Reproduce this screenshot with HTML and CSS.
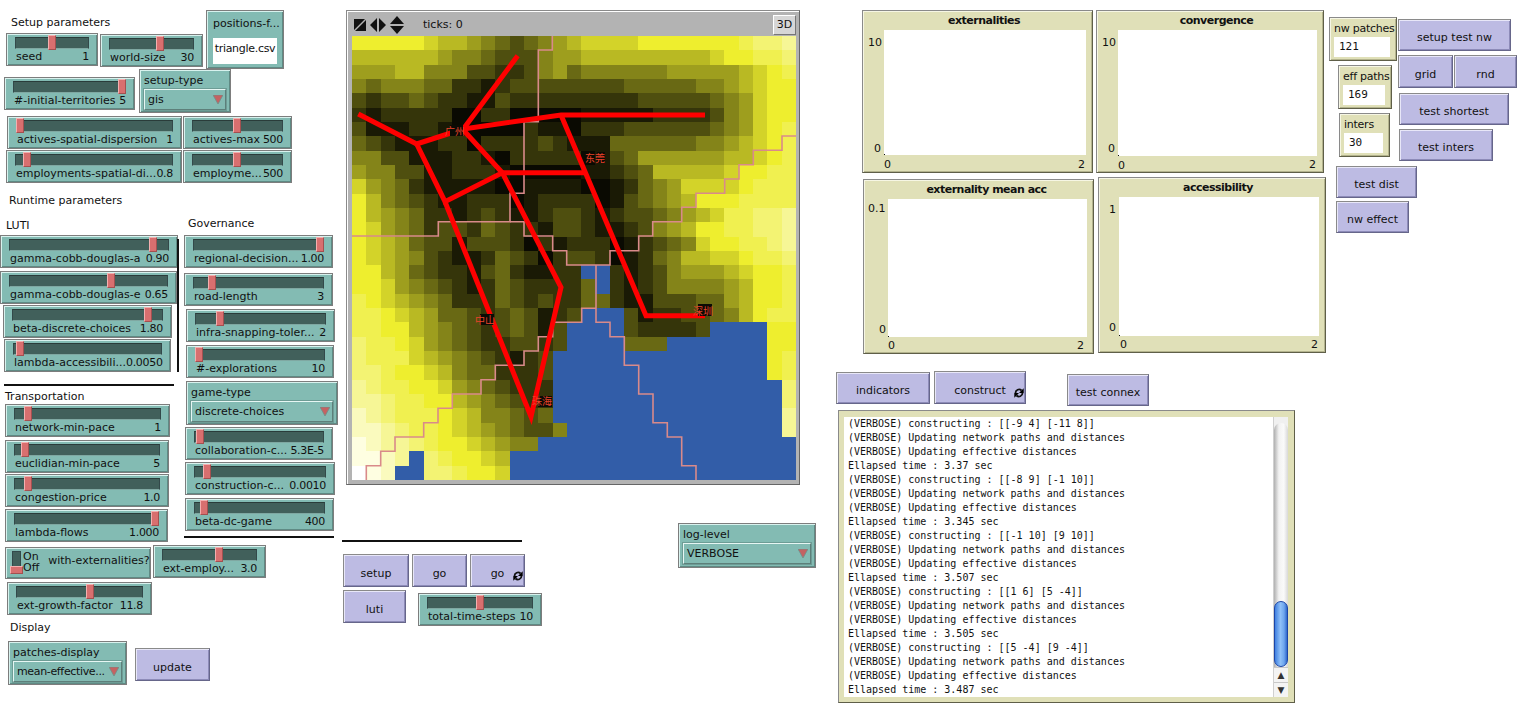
FILE: index.html
```html
<!DOCTYPE html>
<html lang="en">
<head>
  <meta charset="UTF-8" />
  <title>NetLogo interface</title>
  <link rel="stylesheet" href="styles.css">
</head>
<body>
<div class="canvas">

  <!-- setup -->
  <div class="note n-setup">Setup parameters</div>
  <div class="slider w-seed"><div class="track"><i class="thumb" style="--v:50"></i></div><div class="row"><span>seed</span><span>1</span></div></div>
  <div class="slider w-world"><div class="track"><i class="thumb" style="--v:61"></i></div><div class="row"><span>world-size</span><span>30</span></div></div>
  <div class="inputbox w-positions"><div class="input-label">positions-f...</div><div class="input-value">triangle.csv</div></div>
  <div class="slider w-terr"><div class="track"><i class="thumb" style="--v:100"></i></div><div class="row"><span>#-initial-territories</span><span>5</span></div></div>
  <div class="chooser w-setuptype"><div class="chooser-label">setup-type</div><div class="chooser-box"><span>gis</span><svg class="arrow" viewBox="0 0 10 10"><path d="M0 0H10L5 9Z"/></svg></div></div>
  <div class="slider w-actives"><div class="track"><i class="thumb" style="--v:0"></i></div><div class="row"><span>actives-spatial-dispersion</span><span>1</span></div></div>
  <div class="slider w-activesmax"><div class="track"><i class="thumb" style="--v:49"></i></div><div class="row"><span>actives-max</span><span>500</span></div></div>
  <div class="slider w-employ"><div class="track"><i class="thumb" style="--v:5"></i></div><div class="row"><span>employments-spatial-di...</span><span>0.8</span></div></div>
  <div class="slider w-employmax"><div class="track"><i class="thumb" style="--v:49"></i></div><div class="row"><span>employme...</span><span>500</span></div></div>

  <!-- runtime -->
  <div class="note n-runtime">Runtime parameters</div>
  <div class="note n-luti">LUTI</div>
  <div class="note n-gov">Governance</div>
  <div class="slider w-gammaa"><div class="track"><i class="thumb" style="--v:92"></i></div><div class="row"><span>gamma-cobb-douglas-a</span><span>0.90</span></div></div>
  <div class="slider w-gammae"><div class="track"><i class="thumb" style="--v:65"></i></div><div class="row"><span>gamma-cobb-douglas-e</span><span>0.65</span></div></div>
  <div class="slider w-beta"><div class="track"><i class="thumb" style="--v:92"></i></div><div class="row"><span>beta-discrete-choices</span><span>1.80</span></div></div>
  <div class="slider w-lambda"><div class="track"><i class="thumb" style="--v:2"></i></div><div class="row"><span>lambda-accessibili...</span><span>0.0050</span></div></div>
  <div class="rule r-luti"></div>
  <div class="rule r-transport"></div>
  <div class="note n-transport">Transportation</div>
  <div class="slider w-network"><div class="track"><i class="thumb" style="--v:7"></i></div><div class="row"><span>network-min-pace</span><span>1</span></div></div>
  <div class="slider w-euclid"><div class="track"><i class="thumb" style="--v:5"></i></div><div class="row"><span>euclidian-min-pace</span><span>5</span></div></div>
  <div class="slider w-congestion"><div class="track"><i class="thumb" style="--v:7"></i></div><div class="row"><span>congestion-price</span><span>1.0</span></div></div>
  <div class="slider w-flows"><div class="track"><i class="thumb" style="--v:100"></i></div><div class="row"><span>lambda-flows</span><span>1.000</span></div></div>
  <div class="switch w-ext">
    <div class="switch-track"><i class="switch-thumb"></i></div>
    <div class="switch-states"><span>On</span><span>Off</span></div>
    <div class="switch-label">with-externalities?</div>
  </div>
  <div class="slider w-extemploy"><div class="track"><i class="thumb" style="--v:61"></i></div><div class="row"><span>ext-employ...</span><span>3.0</span></div></div>
  <div class="slider w-extgrowth"><div class="track"><i class="thumb" style="--v:59"></i></div><div class="row"><span>ext-growth-factor</span><span>11.8</span></div></div>
  <div class="note n-display">Display</div>
  <div class="chooser w-patches"><div class="chooser-label">patches-display</div><div class="chooser-box"><span>mean-effective...</span><svg class="arrow" viewBox="0 0 10 10"><path d="M0 0H10L5 9Z"/></svg></div></div>
  <div class="btn w-update">update</div>

  <!-- governance -->
  <div class="slider w-regional"><div class="track"><i class="thumb" style="--v:100"></i></div><div class="row"><span>regional-decision...</span><span>1.00</span></div></div>
  <div class="slider w-road"><div class="track"><i class="thumb" style="--v:12"></i></div><div class="row"><span>road-length</span><span>3</span></div></div>
  <div class="slider w-infra"><div class="track"><i class="thumb" style="--v:17"></i></div><div class="row"><span>infra-snapping-toler...</span><span>2</span></div></div>
  <div class="slider w-explo"><div class="track"><i class="thumb" style="--v:0"></i></div><div class="row"><span>#-explorations</span><span>10</span></div></div>
  <div class="chooser w-game"><div class="chooser-label">game-type</div><div class="chooser-box"><span>discrete-choices</span><svg class="arrow" viewBox="0 0 10 10"><path d="M0 0H10L5 9Z"/></svg></div></div>
  <div class="slider w-collab"><div class="track"><i class="thumb" style="--v:2"></i></div><div class="row"><span>collaboration-c...</span><span>5.3E-5</span></div></div>
  <div class="slider w-construct"><div class="track"><i class="thumb" style="--v:7"></i></div><div class="row"><span>construction-c...</span><span>0.0010</span></div></div>
  <div class="slider w-betadc"><div class="track"><i class="thumb" style="--v:5"></i></div><div class="row"><span>beta-dc-game</span><span>400</span></div></div>
  <div class="rule r-gov"></div>

  <!-- world view -->
  <div class="view">
    <div class="view-head">
      <svg class="view-icons" width="54" height="18" viewBox="0 0 54 18">
        <path d="M1 3H12L1 14Z M13 4V15H2Z"/>
        <path d="M24 2V16L17 9Z M26 2V16L33 9Z"/>
        <path d="M44 0L51 8H37Z M44 18L51 10H37Z"/>
      </svg>
      <span class="ticks">ticks: 0</span>
      <span class="btn3d">3D</span>
    </div>
    <svg class="world" viewBox="352 36 444 444" width="444" height="444">
      <g id="patches" shape-rendering="crispEdges"></g>
      <g class="borders">
        <polyline points="552.3,36 552.3,50 538.3,50 538.3,121.7 524,121.7 524,193.3 510,193.3 510,221.7 438.3,221.7 438.3,236 352,236"/>
        <polyline points="510,221.7 524,221.7 524,236 552.7,236 552.7,250.7 566.7,250.7 566.7,265 610,265 610,250.7 638.7,250.7 638.7,236 652.7,236 652.7,221.7 681.7,221.7 681.7,207.3 696,207.3 696,193.3 724.7,193.3 724.7,179 739,179 739,164.7 753.3,164.7 753.3,150.3 782,150.3 782,136 796,136"/>
        <polyline points="596,265 596,322.3 610,322.3 610,336.7 624.3,336.7 624.3,365.3 638.7,365.3 638.7,394 653,394 653,422.7 667.3,422.7 667.3,437 681.7,437 681.7,465.7 696,465.7 696,480"/>
        <polyline points="596,308.3 581.7,308.3 581.7,322.3 552.7,322.3 552.7,336.7 538.3,336.7 538.3,351 524,351 524,365.3 495.3,365.3 495.3,379.7 481,379.7 481,394 452.3,394 452.3,408.3 438,408.3 438,422.7 423.7,422.7 423.7,437 395,437 395,451.3 380.7,451.3 380.7,465.7 366.3,465.7 366.3,480"/>
      </g>
      <g class="roads">
        <polyline points="517.7,55.7 463.3,129 416.7,144 358.3,114"/>
        <polyline points="463.3,129 561,115 705,115"/>
        <polyline points="463.3,130 502.3,172.7 445,201.7 416.7,144"/>
        <polyline points="445,201.7 531,416.7 561,287.3 502.3,172.7 586.7,172.7"/>
        <polyline points="561,115 646,315.7 705,315.7"/>
      </g>
      <g class="cities">
        <rect x="450" y="125" width="13" height="11"/>
        <rect x="597" y="152" width="8" height="11"/>
        <rect x="480" y="314" width="14" height="11"/>
        <rect x="538" y="396" width="14" height="11"/>
        <rect x="698" y="304" width="14" height="12"/>
      </g>
      <g class="city-names">
        <text x="445" y="135">广州</text>
        <text x="585" y="162">东莞</text>
        <text x="475" y="324">中山</text>
        <text x="532" y="405">珠海</text>
        <text x="693" y="315">深圳</text>
      </g>
    </svg>
  </div>

  <div class="rule r-view"></div>
  <div class="btn w-setup">setup</div>
  <div class="btn w-go">go</div>
  <div class="btn w-goloop">go<svg class="forever" viewBox="0 0 10 10"><path class="loop" d="M1.5 5A3.5 3.5 0 0 1 7.5 2.5M8.5 5A3.5 3.5 0 0 1 2.5 7.5"/><path d="M9.7 .3V5H5ZM.3 9.7V5H5Z"/></svg></div>
  <div class="btn w-luti">luti</div>
  <div class="slider w-total"><div class="track"><i class="thumb" style="--v:50"></i></div><div class="row"><span>total-time-steps</span><span>10</span></div></div>
  <div class="chooser w-log"><div class="chooser-label">log-level</div><div class="chooser-box"><span>VERBOSE</span><svg class="arrow" viewBox="0 0 10 10"><path d="M0 0H10L5 9Z"/></svg></div></div>

  <!-- plots -->
  <div class="plot p-ext">
    <div class="plot-title">externalities</div>
    <div class="plot-area"></div>
    <span class="ymax">10</span><span class="ymin">0</span><span class="xmin">0</span><span class="xmax">2</span>
  </div>
  <div class="plot p-conv">
    <div class="plot-title">convergence</div>
    <div class="plot-area"></div>
    <span class="ymax">10</span><span class="ymin">0</span><span class="xmin">0</span><span class="xmax">2</span>
  </div>
  <div class="plot p-mean">
    <div class="plot-title">externality mean acc</div>
    <div class="plot-area"></div>
    <span class="ymax">0.1</span><span class="ymin">0</span><span class="xmin">0</span><span class="xmax">2</span>
  </div>
  <div class="plot p-access">
    <div class="plot-title">accessibility</div>
    <div class="plot-area"></div>
    <span class="ymax">1</span><span class="ymin">0</span><span class="xmin">0</span><span class="xmax">2</span>
  </div>

  <!-- monitors and test buttons -->
  <div class="monitor m-nw"><div class="monitor-label">nw patches</div><div class="monitor-value">121</div></div>
  <div class="monitor m-eff"><div class="monitor-label">eff paths</div><div class="monitor-value">169</div></div>
  <div class="monitor m-inters"><div class="monitor-label">inters</div><div class="monitor-value">30</div></div>
  <div class="btn w-setuptest">setup test nw</div>
  <div class="btn w-grid">grid</div>
  <div class="btn w-rnd">rnd</div>
  <div class="btn w-shortest">test shortest</div>
  <div class="btn w-testinters">test inters</div>
  <div class="btn w-dist">test dist</div>
  <div class="btn w-nweffect">nw effect</div>
  <div class="btn w-indicators">indicators</div>
  <div class="btn w-constructbtn">construct<svg class="forever" viewBox="0 0 10 10"><path class="loop" d="M1.5 5A3.5 3.5 0 0 1 7.5 2.5M8.5 5A3.5 3.5 0 0 1 2.5 7.5"/><path d="M9.7 .3V5H5ZM.3 9.7V5H5Z"/></svg></div>
  <div class="btn w-connex">test connex</div>

  <!-- output -->
  <div class="output">
    <pre class="log">(VERBOSE) constructing : [[-9 4] [-11 8]]
(VERBOSE) Updating network paths and distances
(VERBOSE) Updating effective distances
Ellapsed time : 3.37 sec
(VERBOSE) constructing : [[-8 9] [-1 10]]
(VERBOSE) Updating network paths and distances
(VERBOSE) Updating effective distances
Ellapsed time : 3.345 sec
(VERBOSE) constructing : [[-1 10] [9 10]]
(VERBOSE) Updating network paths and distances
(VERBOSE) Updating effective distances
Ellapsed time : 3.507 sec
(VERBOSE) constructing : [[1 6] [5 -4]]
(VERBOSE) Updating network paths and distances
(VERBOSE) Updating effective distances
Ellapsed time : 3.505 sec
(VERBOSE) constructing : [[5 -4] [9 -4]]
(VERBOSE) Updating network paths and distances
(VERBOSE) Updating effective distances
Ellapsed time : 3.487 sec</pre>
    <div class="scrollbar">
      <div class="scroll-track"><div class="scroll-thumb"></div></div>
      <div class="scroll-btn">▲</div>
      <div class="scroll-btn">▼</div>
    </div>
  </div>
</div>
<script src="script.js"></script>
</body>
</html>
```

FILE: styles.css
```css
* {
  box-sizing: border-box;
}
html, body {
  margin: 0;
  padding: 0;
  height: 100%;
  background: white;
  overflow: hidden;
}
body {
  font-family: "DejaVu Sans", sans-serif;
  font-size: 11px;
  color: #111;
}
.canvas {
  position: relative;
  width: 1526px;
  height: 713px;
}

/* every widget sits on the free canvas */
.note, .rule, .slider, .chooser, .btn, .inputbox, .switch, .plot, .monitor, .view, .output {
  position: absolute;
}

.note {
  line-height: 14px;
  white-space: nowrap;
}
.n-setup { left: 11px; top: 16px; }
.n-runtime { left: 9px; top: 194px; }
.n-luti { left: 6px; top: 219px; }
.n-gov { left: 188px; top: 217px; }
.n-transport { left: 5px; top: 390px; }
.n-display { left: 10px; top: 621px; }

.rule {
  height: 2px;
  background: #111;
}
.r-luti { left: 177px; top: 239px; width: 2px; height: 133px; }
.r-transport { left: 4px; top: 384px; width: 170px; }
.r-gov { left: 184px; top: 536px; width: 150px; }
.r-view { left: 342px; top: 540px; width: 180px; }

/* sliders */
.slider, .chooser, .inputbox, .switch {
  background: #83bbb3;
  border: 1px solid #7d7d7d;
  box-shadow: inset 1px 1px 0 #d8f2ee, inset -1px -1px 0 #5f8a84;
}
.slider {
  padding: 3px 8px 0;
}
.track {
  position: relative;
  height: 12px;
  background: #41605b;
  border: 1px solid #33494a;
  border-top-color: #2a3c3a;
  border-bottom-color: #7fa8a2;
}
.thumb {
  position: absolute;
  top: -3px;
  left: calc((100% - 6px) * var(--v) / 100);
  width: 8px;
  height: 15px;
  margin-left: -1px;
  background: #d86f6f;
  border: 1px solid #a35050;
  border-left-color: #f3b0b0;
  border-top-color: #f3b0b0;
}
.row {
  display: flex;
  justify-content: space-between;
  margin-top: 1px;
  padding: 0 0 0 1px;
  line-height: 14px;
  white-space: nowrap;
}
.row span:last-child {
  letter-spacing: -0.3px;
}

.w-seed { left: 6px; top: 33px; width: 92px; height: 33px; }
.w-world { left: 100px; top: 34px; width: 103px; height: 33px; }
.w-terr { left: 4px; top: 77px; width: 131px; height: 33px; }
.w-actives { left: 7px; top: 116px; width: 175px; height: 33px; }
.w-activesmax { left: 183px; top: 116px; width: 109px; height: 33px; }
.w-employ { left: 6px; top: 150px; width: 176px; height: 33px; }
.w-employmax { left: 183px; top: 150px; width: 109px; height: 33px; }
.w-gammaa { left: 0; top: 235px; width: 178px; height: 33px; }
.w-gammae { left: 0; top: 271px; width: 177px; height: 33px; }
.w-beta { left: 3px; top: 305px; width: 169px; height: 33px; }
.w-lambda { left: 4px; top: 339px; width: 167px; height: 33px; }
.w-network { left: 5px; top: 404px; width: 165px; height: 33px; }
.w-euclid { left: 5px; top: 440px; width: 164px; height: 33px; }
.w-congestion { left: 5px; top: 474px; width: 164px; height: 33px; }
.w-flows { left: 5px; top: 509px; width: 163px; height: 33px; }
.w-extemploy { left: 153px; top: 545px; width: 113px; height: 33px; }
.w-extgrowth { left: 7px; top: 582px; width: 145px; height: 33px; }
.w-regional { left: 184px; top: 235px; width: 149px; height: 33px; }
.w-road { left: 184px; top: 273px; width: 149px; height: 33px; }
.w-infra { left: 186px; top: 309px; width: 149px; height: 33px; }
.w-explo { left: 186px; top: 345px; width: 148px; height: 33px; }
.w-collab { left: 185px; top: 427px; width: 148px; height: 33px; }
.w-construct { left: 185px; top: 462px; width: 150px; height: 33px; }
.w-betadc { left: 185px; top: 498px; width: 149px; height: 33px; }
.w-total { left: 418px; top: 593px; width: 124px; height: 33px; }

/* choosers */
.chooser {
  padding: 4px 4px 0;
}
.chooser-label {
  line-height: 14px;
  white-space: nowrap;
}
.chooser-box {
  display: flex;
  justify-content: space-between;
  align-items: center;
  height: 21px;
  margin-top: 1px;
  padding: 0 2px 0 3px;
  border: 1px solid #5d7f7a;
  border-top-color: #e6f6f3;
  border-left-color: #e6f6f3;
  box-shadow: 0 0 0 1px rgba(70, 100, 95, 0.35);
  white-space: nowrap;
}
.w-patches .chooser-box span {
  letter-spacing: -0.35px;
}
.arrow {
  width: 10px;
  height: 10px;
  flex: none;
}
.arrow path {
  fill: #c46262;
  stroke: #6f8f8a;
  stroke-width: 0.8;
}
.w-setuptype { left: 139px; top: 69px; width: 92px; height: 44px; }
.w-patches { left: 8px; top: 641px; width: 119px; height: 44px; }
.w-game { left: 186px; top: 381px; width: 152px; height: 44px; }
.w-log { left: 678px; top: 523px; width: 138px; height: 45px; }

/* input */
.inputbox {
  padding: 6px 6px 0;
}
.input-label {
  line-height: 14px;
  white-space: nowrap;
}
.input-value {
  height: 26px;
  margin-top: 7px;
  background: white;
  letter-spacing: -0.3px;
  line-height: 22px;
  text-align: center;
  white-space: nowrap;
}
.w-positions { left: 206px; top: 10px; width: 78px; height: 59px; }

/* switch */
.switch {
  display: flex;
  padding: 3px 0 0 5px;
}
.switch-track {
  position: relative;
  width: 9px;
  height: 23px;
  margin-left: 1px;
  background: #41605b;
  border: 1px solid #33494a;
}
.switch-thumb {
  position: absolute;
  left: -3px;
  bottom: -1px;
  width: 13px;
  height: 8px;
  background: #d86f6f;
  border: 1px solid #a35050;
  border-top-color: #f3b0b0;
  border-left-color: #f3b0b0;
}
.switch-states {
  display: flex;
  flex-direction: column;
  margin-left: 2px;
  line-height: 11px;
}
.switch-label {
  margin-left: 9px;
  line-height: 19px;
  white-space: nowrap;
}
.w-ext { left: 5px; top: 547px; width: 146px; height: 32px; }

/* buttons */
.btn {
  display: flex;
  align-items: center;
  justify-content: center;
  padding-top: 5px;
  background: #bdbbe3;
  border: 1px solid #8a8a8a;
  border-right-color: #66668a;
  border-bottom-color: #66668a;
  box-shadow: inset 1px 1px 0 #e8e7f8, inset -1px -1px 0 #8d8bb8;
  white-space: nowrap;
}
.forever {
  position: absolute;
  right: 1px;
  bottom: 5px;
  width: 10px;
  height: 10px;
}
.loop {
  fill: none;
  stroke: #111;
  stroke-width: 1.8;
}
.w-update { left: 135px; top: 648px; width: 75px; height: 33px; }
.w-setup { left: 343px; top: 554px; width: 66px; height: 33px; }
.w-go { left: 412px; top: 554px; width: 55px; height: 33px; }
.w-goloop { left: 470px; top: 554px; width: 55px; height: 33px; }
.w-luti { left: 343px; top: 590px; width: 63px; height: 33px; }
.w-setuptest { left: 1398px; top: 19px; width: 113px; height: 32px; }
.w-grid { left: 1398px; top: 55px; width: 55px; height: 33px; }
.w-rnd { left: 1454px; top: 55px; width: 63px; height: 33px; }
.w-shortest { left: 1399px; top: 93px; width: 110px; height: 32px; }
.w-testinters { left: 1399px; top: 129px; width: 94px; height: 32px; }
.w-dist { left: 1336px; top: 166px; width: 81px; height: 32px; }
.w-nweffect { left: 1336px; top: 201px; width: 73px; height: 32px; }
.w-indicators { left: 836px; top: 372px; width: 94px; height: 32px; }
.w-constructbtn { left: 934px; top: 371px; width: 92px; height: 33px; }
.w-connex { left: 1067px; top: 374px; width: 82px; height: 32px; }

/* world view */
.view {
  left: 346px;
  top: 10px;
  width: 454px;
  height: 475px;
  display: flex;
  flex-direction: column;
  background: #b3b3b3;
  border: 1px solid #8a8a8a;
  border-right-color: #666;
  border-bottom-color: #666;
  box-shadow: inset 1px 1px 0 white;
}
.view-head {
  display: flex;
  align-items: center;
  height: 25px;
  padding: 2px 3px 0 6px;
}
.view-icons {
  flex: none;
  fill: #111;
}
.ticks {
  margin-left: 16px;
}
.btn3d {
  margin-left: auto;
  width: 23px;
  height: 20px;
  background: #d6d6d6;
  border: 1px solid #777;
  border-top-color: white;
  border-left-color: white;
  text-align: center;
  line-height: 18px;
}
.world {
  display: block;
  flex: none;
  margin-left: 5px;
}
.borders polyline {
  fill: none;
  stroke: #d98a8a;
  stroke-width: 1.6;
}
.roads polyline {
  fill: none;
  stroke: #ff0000;
  stroke-width: 5;
  stroke-linejoin: miter;
}
.cities rect {
  fill: #0b0b05;
}
.city-names text {
  font-family: "Noto Sans CJK SC", sans-serif;
  font-size: 10px;
  fill: #e8432a;
}

/* plots */
.plot, .monitor {
  background: #e0e0b8;
  border: 1px solid #8a8a8a;
  border-right-color: #5f5f48;
  border-bottom-color: #5f5f48;
  box-shadow: inset 1px 1px 0 #f6f6e4, inset -1px -1px 0 #b4b48e;
}
.plot span {
  position: absolute;
  margin-top: 1px;
  line-height: 14px;
}
.plot-title {
  position: absolute;
  top: 3px;
  left: 21px;
  right: 8px;
  text-align: center;
  font-weight: bold;
  letter-spacing: -0.5px;
  line-height: 14px;
  white-space: nowrap;
}
.plot-area {
  position: absolute;
  background: white;
}
.plot-area::after {
  content: "";
  position: absolute;
  left: 0;
  bottom: 0;
  width: 1px;
  height: 1px;
  background: #111;
}
.p-ext { left: 862px; top: 10px; width: 231px; height: 163px; }
.p-ext .plot-area { left: 21px; top: 19px; width: 202px; height: 125px; }
.p-ext .ymax { left: 5px; top: 24px; }
.p-ext .ymin { left: 11px; top: 130px; }
.p-ext .xmin { left: 21px; top: 146px; }
.p-ext .xmax { left: 215px; top: 146px; }
.p-conv { left: 1096px; top: 10px; width: 228px; height: 163px; }
.p-conv .plot-area { left: 21px; top: 19px; width: 199px; height: 126px; }
.p-conv .ymax { left: 5px; top: 24px; }
.p-conv .ymin { left: 11px; top: 130px; }
.p-conv .xmin { left: 21px; top: 147px; }
.p-conv .xmax { left: 212px; top: 146px; }
.p-mean { left: 863px; top: 179px; width: 231px; height: 175px; }
.p-mean .plot-title { left: 24px; }
.p-mean .plot-area { left: 24px; top: 19px; width: 199px; height: 138px; }
.p-mean .ymax { left: 4px; top: 21px; }
.p-mean .ymin { left: 15px; top: 142px; }
.p-mean .xmin { left: 24px; top: 158px; }
.p-mean .xmax { left: 213px; top: 158px; }
.p-access { left: 1098px; top: 177px; width: 228px; height: 176px; }
.p-access .plot-title { left: 20px; }
.p-access .plot-area { left: 20px; top: 19px; width: 200px; height: 139px; }
.p-access .ymax { left: 10px; top: 24px; }
.p-access .ymin { left: 10px; top: 142px; }
.p-access .xmin { left: 21px; top: 159px; }
.p-access .xmax { left: 212px; top: 159px; }

/* monitors */
.monitor {
  padding: 4px 6px 4px 4px;
}
.monitor-label {
  line-height: 14px;
  letter-spacing: -0.25px;
  white-space: nowrap;
  text-align: left;
}
.monitor-value {
  height: 20px;
  margin-top: 1px;
  padding-left: 5px;
  background: white;
  font-family: "DejaVu Sans Mono", monospace;
  font-size: 11px;
  line-height: 19px;
}
.m-nw { left: 1329px; top: 17px; width: 68px; height: 44px; }
.m-eff { left: 1338px; top: 65px; width: 54px; height: 44px; }
.m-inters { left: 1339px; top: 113px; width: 51px; height: 44px; }

/* output area */
.output {
  left: 838px;
  top: 410px;
  width: 457px;
  height: 293px;
  display: flex;
  padding: 6px 6px 5px 5px;
  background: #e0e0b8;
  border: 1px solid #8a8a8a;
  border-right-color: #5f5f48;
  border-bottom-color: #5f5f48;
}
.log {
  flex: 1;
  margin: 0;
  padding: 0 0 0 4px;
  background: white;
  font-family: "DejaVu Sans Mono", monospace;
  font-size: 10px;
  line-height: 14px;
  overflow: hidden;
}
.scrollbar {
  display: flex;
  flex-direction: column;
  flex: none;
  width: 15px;
  background: #f0f0f0;
  border-left: 1px solid #d0d0d0;
}
.scroll-track {
  position: relative;
  flex: 1;
  margin-top: 6px;
  border-radius: 7px 7px 0 0;
  background: linear-gradient(to right, #b0b0b0, #f2f2f2 35%, #fafafa 70%, #d8d8d8);
}
.scroll-thumb {
  position: absolute;
  left: 0;
  right: 0;
  bottom: 0;
  height: 66px;
  border: 1px solid #1c46a8;
  border-radius: 7px;
  background: linear-gradient(to right, #3f7fe0, #8fc0f8 45%, #6ea6ee 75%, #2f68cc);
}
.scroll-btn {
  height: 15px;
  font-size: 9px;
  line-height: 15px;
  text-align: center;
  color: #333;
  background: #f4f4f4;
  border-top: 1px solid #c8c8c8;
}
```

FILE: script.js
```js
// world patches, one string per row, one char per patch
// 0-9 black to yellow, a-f yellow to white, ~ is water
var rows = [
  "999998776543456788889999999abbc",
  "7777776554333566777777777899aab",
  "666775553322356455555566666789a",
  "5455544221233333333444445567899",
  "3233432211322222222233333456899",
  "2122222002200000111112222356899",
  "311122100000211022233333345689a",
  "432111220222232111444444556789a",
  "553311122102222201346666667789a",
  "65533112221000001123477777899aa",
  "8654211111001111001245688889aaa",
  "975432112220122220134567999aaaa",
  "97654221232112332123345678aabbc",
  "98654233243221332112356799aabbc",
  "987643313332021222012345899aabc",
  "9876532112432023320124577889aab",
  "9976432213421122~~212356667899a",
  "99865432124322224~212355556799a",
  "a98765422243232244211333446799a",
  "aa98764432343123~~~3122334579aa",
  "aa9976543234313~~~~322223~~~~99",
  "baa986543223323~~~~444~~~~~~~99",
  "baaa8765432123~~~~~~~~~~~~~~~9a",
  "bba99875442223~~~~~~~~~~~~~~~9a",
  "cbaa9986543222~~~~~~~~~~~~~~~~b",
  "ccbaa997654322~~~~~~~~~~~~~~~~b",
  "dcbaaa98755434~~~~~~~~~~~~~~~~c",
  "ddcbaa987654335~~~~~~~~~~~~~~~c",
  "edccba9987655~~~~~~~~~~~~~~~~~~",
  "eedc~ba9987~~~~~~~~~~~~~~~~~~~~",
  "fed~~bba998~~~~~~~~~~~~~~~~~~~~"
];

var shades = {
  "0": "#0a0a02", "1": "#1a1a05", "2": "#35350a", "3": "#4f4f0f", "4": "#696914",
  "5": "#848419", "6": "#9e9e1e", "7": "#b9b923", "8": "#d3d329", "9": "#eeee2e",
  "a": "#f0f050", "b": "#f3f373", "c": "#f6f696", "d": "#fafabe", "e": "#fefee1", "f": "#ffffff",
  "~": "#325da8"
};

var size = 444 / 31;
var group = document.getElementById("patches");
for (var r = 0; r < rows.length; r++) {
  for (var c = 0; c < 31; c++) {
    var cell = document.createElementNS("http://www.w3.org/2000/svg", "rect");
    cell.setAttribute("x", 352 + c * size);
    cell.setAttribute("y", 36 + r * size);
    cell.setAttribute("width", size + 0.5);
    cell.setAttribute("height", size + 0.5);
    cell.setAttribute("fill", shades[rows[r][c]]);
    group.appendChild(cell);
  }
}
```
